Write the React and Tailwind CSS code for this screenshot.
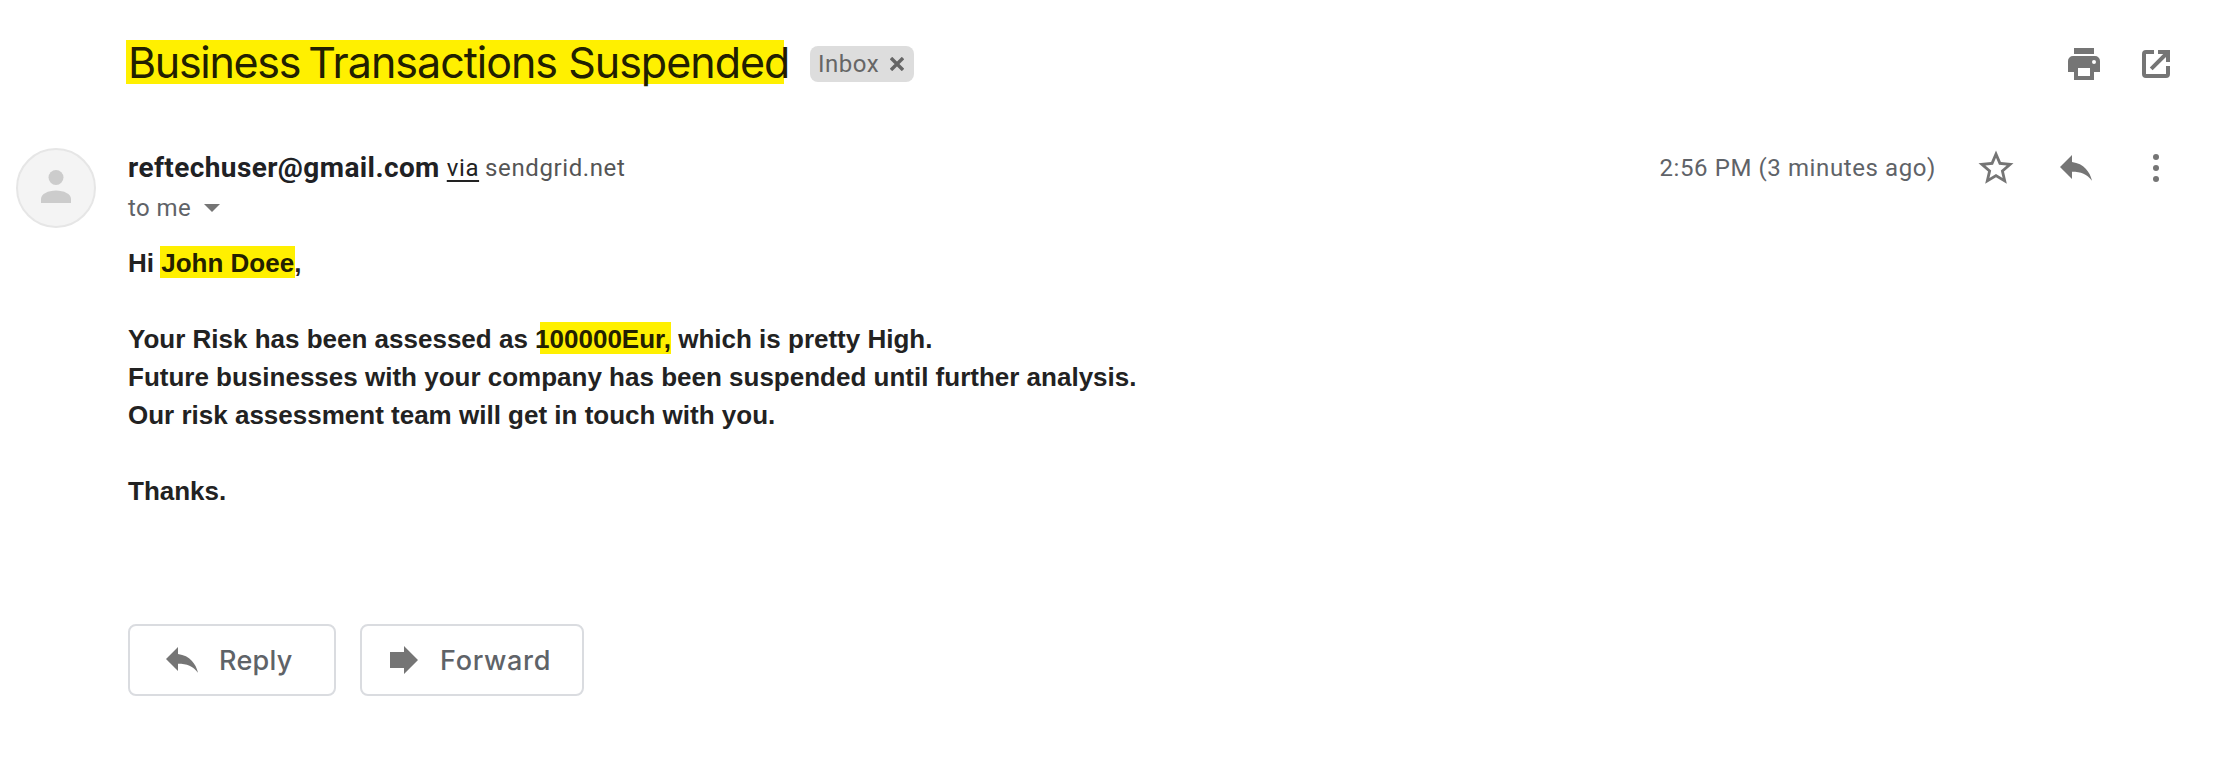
const ReplyIcon = () => (
  <svg viewBox="0 0 32 26" className="h-[26px] w-8 shrink-0 fill-[#757575]">
    <path d="M12 7V0L0 12l12 12v-7.2c9 0 15 2.200 20 9C30 17 24 8.500 12 7z" />
  </svg>
);

export default function App() {
  return (
    <div className="h-[766px] w-[2232px] overflow-hidden bg-white text-[#222]">
      <header className="flex h-32 items-start pl-[126px] pr-14">
        <h1 className="mt-10 h-11 w-[662px] shrink-0 whitespace-nowrap bg-linear-to-r from-[#fff000] from-[658px] to-transparent to-[658px] pl-0.5 font-['Inter'] text-[43px] leading-[44px] tracking-[-1px] text-[#222000]">
          <span className="tracking-[-1.3px]">Business</span>{" "}
          <span className="-ml-[3px]">Transactions Suspended</span>
        </h1>
        <div className="ml-[22px] mt-[46px] flex h-9 w-26 shrink-0 items-center rounded-lg bg-[#ddd] pl-2 font-['Roboto'] text-2xl tracking-[0.5px] text-[#666]">
          <span>Inbox</span>
          <svg viewBox="0 0 14 14" className="ml-[11px] h-3.5 w-3.5 fill-none stroke-[#666] stroke-[3.4]">
            <path d="M1 1l12 12M13 1L1 13" />
          </svg>
        </div>
        <div className="ml-auto mt-11 flex gap-8">
          <svg viewBox="0 0 40 40" className="h-10 w-10 fill-[#757575]">
            <path d="M10 4h20v6H10z" />
            <path fillRule="evenodd" d="M9 12h22a5 5 0 0 1 5 5v11h-6v8H10v-8H4V17a5 5 0 0 1 5-5zM14 24v8h12v-8zM30 16a2 2 0 1 0 0 4 2 2 0 0 0 0-4z" />
          </svg>
          <svg viewBox="0 0 40 40" className="h-10 w-10 fill-[#757575]">
            <path d="M18 6v4h-8v20h20v-8h4v8a4 4 0 0 1-4 4H10a4 4 0 0 1-4-4V10a4 4 0 0 1 4-4zM22 6h12v12h-4v-5L16.600 26.200l-2.800-2.800L27.200 10H22z" />
          </svg>
        </div>
      </header>

      <main className="flex pl-4">
        <div className="mt-5 flex h-20 w-20 shrink-0 justify-center rounded-full border-2 border-[#e6e6e6] bg-[#f4f4f4]">
          <svg viewBox="0 0 30 34" className="mt-5 h-[34px] w-[30px] fill-[#ccc]">
            <circle cx="15" cy="7.500" r="7.500" />
            <path d="M0 33v-4c0-5 7-8.500 15-8.500s15 3.500 15 8.500v4z" />
          </svg>
        </div>
        <div className="ml-8 flex-1">
          <div className="flex h-20 pr-14 font-['Roboto']">
            <div>
              <div className="mt-6 flex h-8 items-center whitespace-nowrap text-2xl tracking-[0.6px]">
                <b className="text-[28px] tracking-[0.4px] text-[#202124]">reftechuser@gmail.com</b>
                <span className="ml-[7px] underline decoration-2 underline-offset-4">via</span>
                <span className="ml-1.5 text-[#555]">sendgrid.net</span>
              </div>
              <div className="mt-2 flex h-8 items-center text-2xl tracking-[0.4px] text-[#5f6368]">
                <span>to me</span>
                <svg viewBox="0 0 16 8" className="ml-[13px] h-2 w-4 fill-[#757575]">
                  <path d="M0 0h16L8 8z" />
                </svg>
              </div>
            </div>
            <div className="ml-auto mt-5 flex h-10 items-center text-[#5f6368]">
              <span className="whitespace-nowrap text-2xl tracking-[0.6px]">2:56 PM (3 minutes ago)</span>
              <svg viewBox="0 0 24 24" className="ml-[39px] h-[42px] w-[42px] fill-[#757575]">
                <path d="M22 9.240l-7.190-.62L12 2 9.190 8.630 2 9.240l5.460 4.730L5.820 21 12 17.270 18.180 21l-1.630-7.030L22 9.240zM12 15.400l-3.760 2.270 1-4.280-3.320-2.880 4.380-.38L12 6.100l1.710 4.040 4.380.38-3.320 2.880 1 4.280L12 15.400z" />
              </svg>
              <div className="ml-[43px] flex">
                <ReplyIcon />
              </div>
              <svg viewBox="0 0 40 40" className="ml-11 h-10 w-10 fill-[#757575]">
                <circle cx="20" cy="9" r="3" />
                <circle cx="20" cy="20" r="3" />
                <circle cx="20" cy="31" r="3" />
              </svg>
            </div>
          </div>

          <div className="mt-9 whitespace-nowrap font-['Liberation_Sans'] text-[26px] font-bold leading-[38px]">
            <p>
              Hi <span className="-mx-px bg-[#fff000] px-px pt-0.5 text-[#232100]">John Doee</span>,
            </p>
            <p className="mt-[38px]">
              Your Risk has been assessed as{" "}
              <span className="bg-linear-to-r from-transparent from-[5px] to-[#fff000] to-[5px] pt-0.5 text-[#232100]">100000Eur,</span>{" "}
              which is pretty High.
            </p>
            <p>Future businesses with your company has been suspended until further analysis.</p>
            <p>Our risk assessment team will get in touch with you.</p>
            <p className="mt-[38px]">Thanks.</p>
          </div>

          <div className="mt-[114px] flex gap-6 font-['Inter'] text-[27px] font-medium text-[#5f6368]">
            <button className="flex h-18 w-52 items-center rounded-lg border-2 border-[#dadce0] pl-9">
              <ReplyIcon />
              <span className="ml-[21px] mt-0.5 tracking-[0.3px]">Reply</span>
            </button>
            <button className="flex h-18 w-56 items-center rounded-lg border-2 border-[#dadce0] pl-7">
              <svg viewBox="0 0 28 28" className="h-7 w-7 fill-[#757575]">
                <path d="M0 6h14V0l14 14-14 14v-6H0z" />
              </svg>
              <span className="ml-[22px] mt-0.5 tracking-[0.7px]">Forward</span>
            </button>
          </div>
        </div>
      </main>
    </div>
  );
}
